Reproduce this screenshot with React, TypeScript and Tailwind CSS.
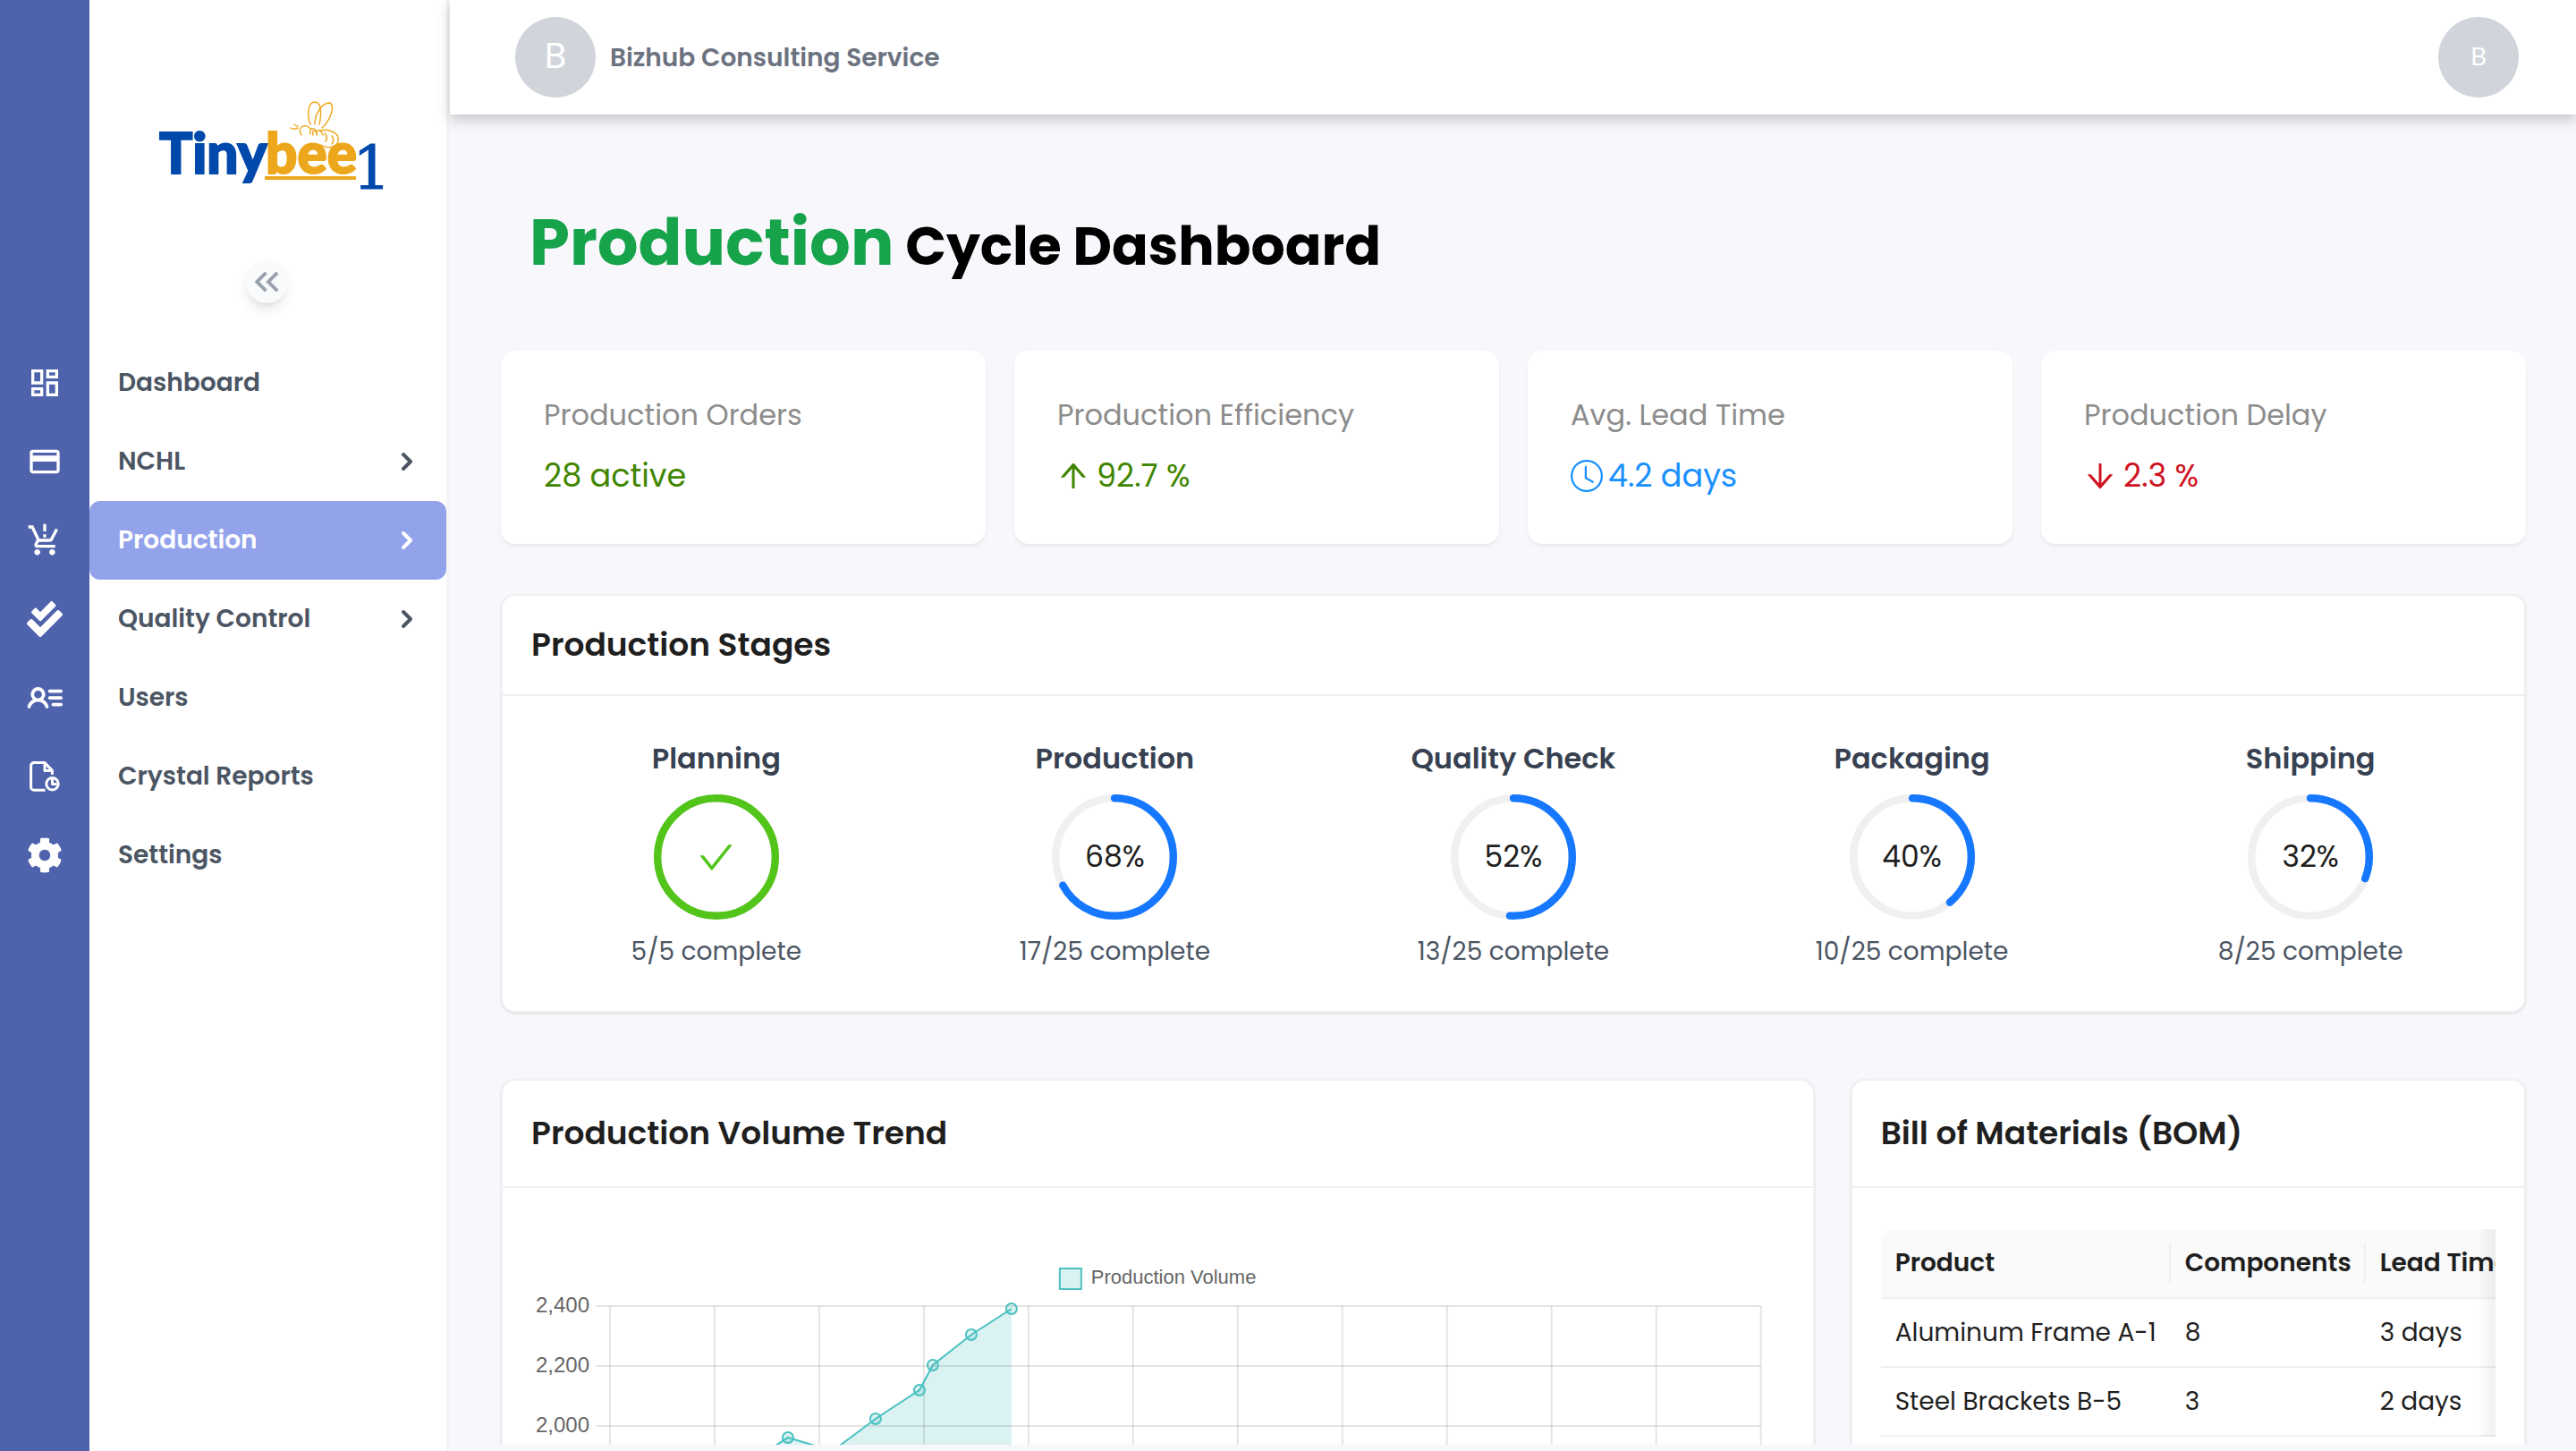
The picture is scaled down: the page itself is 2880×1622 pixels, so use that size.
import type { ReactNode } from 'react';
import { AiOutlineArrowDown, AiOutlineArrowUp, AiOutlineCheck } from 'react-icons/ai';
import { BsClock } from 'react-icons/bs';
import { FaCheckDouble, FaCog } from 'react-icons/fa';
import {
  MdCreditCard,
  MdKeyboardDoubleArrowLeft,
  MdOutlineDashboard,
  MdOutlineProductionQuantityLimits,
} from 'react-icons/md';
import { PiUserListBold } from 'react-icons/pi';
import { clsx } from 'clsx';

interface NavItem {
  label: string;
  icon: ReactNode;
  expandable?: boolean;
  active?: boolean;
}

interface Stage {
  name: string;
  percent: number;
  done: string;
}

function FileClockIcon() {
  return (
    <svg viewBox="0 0 34 34" className="w-[34px] h-[34px]" fill="none" stroke="currentColor" strokeWidth="3" strokeLinejoin="round">
      <path d="M17.5 32.3H5a3.4 3.4 0 0 1-3.4-3.4V5A3.4 3.4 0 0 1 5 1.6h12l8.4 8.8V15" />
      <path d="M17 2v8.6h8.4" />
      <circle cx="25.5" cy="25.3" r="6.7" />
      <path d="M25.5 20v5.6h5" />
    </svg>
  );
}

const navItems: NavItem[] = [
  { label: 'Dashboard', icon: <MdOutlineDashboard size={40} /> },
  { label: 'NCHL', icon: <MdCreditCard size={40} />, expandable: true },
  { label: 'Production', icon: <MdOutlineProductionQuantityLimits size={40} />, expandable: true, active: true },
  { label: 'Quality Control', icon: <FaCheckDouble size={40} />, expandable: true },
  { label: 'Users', icon: <PiUserListBold size={40} /> },
  { label: 'Crystal Reports', icon: <FileClockIcon /> },
  { label: 'Settings', icon: <FaCog size={40} /> },
];

const stats = [
  { label: 'Production Orders', value: '28 active', color: 'text-[#3f8600]' },
  { label: 'Production Efficiency', value: '92.7 %', color: 'text-[#3f8600]', icon: <AiOutlineArrowUp size={40} className="-ml-0.5" /> },
  { label: 'Avg. Lead Time', value: '4.2 days', color: 'text-[#1890ff]', icon: <BsClock size={36} /> },
  { label: 'Production Delay', value: '2.3 %', color: 'text-[#cf1322]', icon: <AiOutlineArrowDown size={40} className="-ml-0.5" /> },
];

const stages: Stage[] = [
  { name: 'Planning', percent: 100, done: '5/5' },
  { name: 'Production', percent: 68, done: '17/25' },
  { name: 'Quality Check', percent: 52, done: '13/25' },
  { name: 'Packaging', percent: 40, done: '10/25' },
  { name: 'Shipping', percent: 32, done: '8/25' },
];

const materials = [
  { product: 'Aluminum Frame A-1', components: 8, leadTime: '3 days' },
  { product: 'Steel Brackets B-5', components: 3, leadTime: '2 days' },
];

// x / y positions of the trend samples inside the chart view box
const trend = [
  [205, 300],
  [287, 247],
  [337, 262],
  [385, 226],
  [434, 194],
  [449, 166],
  [492, 132],
  [537, 103],
];

function Logo() {
  return (
    <svg viewBox="-2 0 280 120" className="w-[280px] h-[120px]" role="img" aria-label="Tinybee1">
      <g fontFamily="Lato, sans-serif" fontWeight="900" fontSize="62" strokeWidth="2">
        <text x="18" y="94" fill="#0049ac" stroke="#0049ac">Tiny</text>
        <text x="137" y="94" fill="#eda71c" stroke="#eda71c">bee</text>
      </g>
      <rect x="136" y="97" width="102" height="4" fill="#eda71c" />
      <text x="234" y="111" fontFamily="'DejaVu Serif', serif" fontSize="68" fill="#0049ac" stroke="#0049ac">1</text>
      <g fill="none" stroke="#eda71c" strokeWidth="1.4" strokeLinecap="round">
        <path d="M187 39c-4-9-3-25 5-25 7 0 8 12 5 25" />
        <path d="M192 39c0-12 8-24 16-24 8 2 1 20-8 28" />
        <path d="M177 51c-6-9 5-14 10-7M187 50c-2-7 5-9 7-2-4-4-5-2-4 3M194 51c-2-6 4-8 7 0" />
        <path d="M198 46c12-3 22 4 20 12-2 8-13 8-19 4M203 49c3 3 3 6 1 9M211 52c3 3 2 6 0 9" />
        <path d="M165 43c3 2 6 1 8 0M169 39c1 2 3 2 4 2" />
      </g>
    </svg>
  );
}

function Sidebar() {
  return (
    <aside className="flex shrink-0">
      <div className="w-[100px] bg-[#4f63ac] pt-96 text-white">
        {navItems.map((item) => (
          <a key={item.label} href="#" aria-label={item.label} className="flex h-[88px] items-center justify-center">
            {item.icon}
          </a>
        ))}
      </div>

      <div className="w-[403px] border-r-4 border-[#f5f5f6] bg-white">
        <div className="flex h-96 flex-col items-center pt-[100px] pr-1">
          <Logo />
          <button
            aria-label="Collapse menu"
            className="mt-[71px] flex size-12 items-center justify-center rounded-full bg-gray-50 text-gray-400 shadow-lg"
          >
            <MdKeyboardDoubleArrowLeft size={46} />
          </button>
        </div>

        <nav>
          {navItems.map((item) => (
            <a
              key={item.label}
              href="#"
              className={clsx(
                'flex h-[88px] items-center justify-between rounded-xl pr-7 pl-8 text-[28px] font-semibold',
                item.active ? 'bg-[#93a3eb] text-white' : 'text-[#4b5563]'
              )}
            >
              {item.label}
              {item.expandable && (
                <svg viewBox="0 0 24 24" className="size-6" fill="none" stroke="currentColor" strokeWidth="4" strokeLinecap="round" strokeLinejoin="round">
                  <path d="M4 4l8 8-8 8" />
                </svg>
              )}
            </a>
          ))}
        </nav>
      </div>
    </aside>
  );
}

function Card({ title, headerClass, children }: { title: string; headerClass: string; children: ReactNode }) {
  return (
    <section className="min-w-0 rounded-2xl border-2 border-[#f0f0f0] bg-white shadow-sm">
      <h2 className={clsx('flex items-center border-b-2 border-[#f0f0f0] px-8 text-[36px] font-semibold text-[#1f1f1f]', headerClass)}>
        {title}
      </h2>
      {children}
    </section>
  );
}

function ProgressRing({ percent }: { percent: number }) {
  const complete = percent === 100;
  // the round cap adds about one percent of its own
  const arc = complete ? 100 : percent - 1;

  return (
    <div className="relative size-[140px]">
      <svg viewBox="0 0 100 100" className="size-full -rotate-90" fill="none" strokeWidth="6">
        <circle cx="50" cy="50" r="47" stroke="#f0f0f0" />
        <circle
          cx="50"
          cy="50"
          r="47"
          pathLength="100"
          stroke={complete ? '#52c41a' : '#1677ff'}
          strokeLinecap={complete ? 'butt' : 'round'}
          strokeDasharray={`${arc} 100`}
        />
      </svg>
      <div className="absolute inset-0 flex items-center justify-center text-[33px] text-[#1f1f1f]">
        {complete ? <AiOutlineCheck size={45} className="text-[#52c41a]" /> : `${percent}%`}
      </div>
    </div>
  );
}

function VolumeChart() {
  const line = trend.map(([x, y]) => `${x},${y}`).join(' ');

  return (
    <svg viewBox="0 0 1401 640" className="block h-auto w-full" fontFamily="'Liberation Sans', Arial, sans-serif">
      <rect x="591" y="58" width="24" height="23" fill="#dbf2f2" stroke="#4bc0c0" strokeWidth="2" />
      <text x="626" y="75" fontSize="22" fill="#666">Production Volume</text>

      <polygon points={`205,640 ${line} 537,640`} fill="#4bc0c0" fillOpacity="0.2" />
      <g stroke="#000" strokeOpacity="0.1" strokeWidth="2">
        {[0, 1, 2, 3, 4, 5, 6, 7, 8, 9, 10, 11].map((i) => (
          <line key={i} x1={88 + i * 117} x2={88 + i * 117} y1="100" y2="640" />
        ))}
        {[100, 167, 234].map((y) => (
          <line key={y} x1="72" x2="1375" y1={y} y2={y} />
        ))}
      </g>
      {['2,400', '2,200', '2,000'].map((label, i) => (
        <text key={label} x="65" y={107 + i * 67} fontSize="24" fill="#666" textAnchor="end">{label}</text>
      ))}

      <polyline points={line} fill="none" stroke="#4bc0c0" strokeWidth="2" />
      {trend.filter((_, i) => i !== 2).map(([x, y]) => (
        <circle key={x} cx={x} cy={y} r="6" fill="#4bc0c0" fillOpacity="0.2" stroke="#4bc0c0" strokeWidth="2" />
      ))}
    </svg>
  );
}

function MaterialsTable() {
  return (
    <div className="relative mx-8 mt-[46px] overflow-hidden rounded-tl-2xl">
      <table className="w-[960px] table-fixed border-separate border-spacing-0 text-left text-[28px] text-[#1f1f1f]">
        <colgroup>
          <col className="w-[324px]" />
          <col className="w-[218px]" />
          <col />
        </colgroup>
        <thead>
          <tr className="h-[78px] bg-[#fafafa]">
            {['Product', 'Components', 'Lead Time'].map((heading, i) => (
              <th key={heading} className="border-b-2 border-[#f0f0f0] py-4 font-semibold">
                <div className={clsx('flex h-11 items-center pl-4', i < 2 && 'border-r-2 border-[#f0f0f0]')}>{heading}</div>
              </th>
            ))}
          </tr>
        </thead>
        <tbody>
          {materials.map((row) => (
            <tr key={row.product} className="h-[77px]">
              <td className="border-b-2 border-[#f0f0f0] pl-4 whitespace-nowrap">{row.product}</td>
              <td className="border-b-2 border-[#f0f0f0] pl-4">{row.components}</td>
              <td className="border-b-2 border-[#f0f0f0] pl-4">{row.leadTime}</td>
            </tr>
          ))}
        </tbody>
      </table>
      {/* Scroll shadow on the clipped edge */}
      <div className="absolute inset-y-0 right-0 w-5 bg-linear-to-l from-black/6 to-transparent" />
    </div>
  );
}

export default function App() {
  return (
    <div className="flex h-screen overflow-hidden bg-[#f7f7fc] font-['Poppins','Inter',sans-serif]">
      <Sidebar />

      <div className="flex min-w-0 flex-1 flex-col pb-[7px]">
        <header className="z-10 flex h-32 shrink-0 items-center justify-between bg-white pr-16 pl-[73px] shadow-[0_6px_14px_rgba(0,0,0,0.2)]">
          <div className="flex items-center gap-4">
            <div className="flex size-[90px] items-center justify-center rounded-full bg-[#d1d5db] pb-1 text-[40px] text-white">B</div>
            <span className="pt-0.5 text-[28px] font-semibold text-[#6b7280]">Bizhub Consulting Service</span>
          </div>
          <button className="flex size-[90px] items-center justify-center rounded-full bg-[#d1d5db] pb-1 font-['Noto_Sans',sans-serif] text-[28px] text-white">
            B
          </button>
        </header>

        <main className="min-h-0 flex-1 overflow-hidden pr-14 pl-[57px]">
          <h1 className="mt-[93px] mb-[63px] pl-8 text-[60px] leading-[108px] font-bold text-black">
            <span className="text-[72px] leading-none text-[#16a34a]">Production</span> Cycle Dashboard
          </h1>

          <div className="grid grid-cols-4 gap-8">
            {stats.map((stat) => (
              <div key={stat.label} className="rounded-2xl bg-white p-12 shadow-md shadow-black/5">
                <div className="text-[32px] leading-[48px] text-[#8c8c8c]">{stat.label}</div>
                <div className={clsx('mt-4 flex items-center gap-1.5 text-[35px] leading-[56px]', stat.color)}>
                  {stat.icon}
                  {stat.value}
                </div>
              </div>
            ))}
          </div>

          <div className="mt-14">
            <Card title="Production Stages" headerClass="h-28">
              <div className="grid grid-cols-5 gap-8 px-8 pt-[46px] pb-11">
                {stages.map((stage) => (
                  <div key={stage.name} className="flex flex-col items-center">
                    <h3 className="mb-4 text-[32px] leading-[48px] font-semibold text-[#374151]">{stage.name}</h3>
                    <ProgressRing percent={stage.percent} />
                    <p className="mt-3.5 text-[28px] leading-[44px] text-[#4b5563]">{stage.done} complete</p>
                  </div>
                ))}
              </div>
            </Card>
          </div>

          <div className="mt-[74px] grid grid-cols-[35fr_18fr] gap-10">
            <Card title="Production Volume Trend" headerClass="h-[120px]">
              <div className="p-8">
                <VolumeChart />
              </div>
            </Card>
            <Card title="Bill of Materials (BOM)" headerClass="h-[120px]">
              <MaterialsTable />
            </Card>
          </div>
        </main>
      </div>
    </div>
  );
}
